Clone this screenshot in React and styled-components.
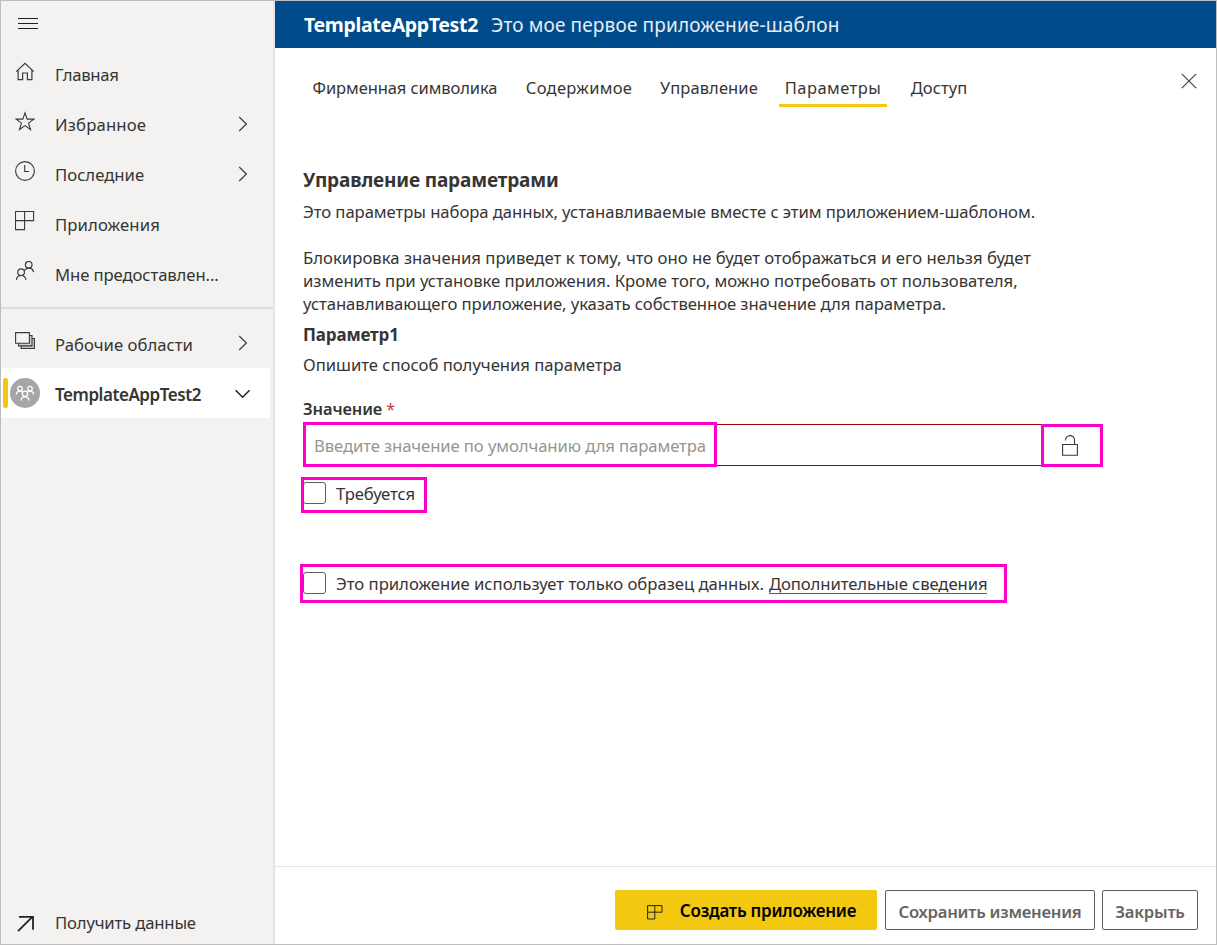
import React from "react";
import styled, { createGlobalStyle, css } from "styled-components";

const Global = createGlobalStyle`
  *, *::before, *::after { box-sizing: border-box; }
  body {
    margin: 0;
    font-family: "Noto Sans", "Open Sans", sans-serif;
    color: #363534;
    background: #fff;
  }
`;

const Frame = styled.div`
  display: flex;
  width: 1217px;
  height: 945px;
  border: 1px solid #bdbdbd;
  background: #fff;
  overflow: hidden;
`;

const Text = styled.span`
  white-space: nowrap;
  font-size: ${(p) => p.$size || 16.7}px;
  font-weight: ${(p) => p.$weight || 400};
  letter-spacing: ${(p) => p.$track || 0}px;
`;

/* ---------- side navigation ---------- */

const Sidebar = styled.nav`
  display: flex;
  flex-direction: column;
  width: 274px;
  flex: none;
  background: #f3f2f1;
  border-right: 2px solid #e6e5e4;
`;

const MenuButton = styled.div`
  height: 48px;
  padding: 16px 0 0 17px;
  flex: none;
  line-height: 0;
`;

const NavRow = styled.div`
  position: relative;
  display: flex;
  align-items: center;
  height: ${(p) => p.$height || 50}px;
  flex: none;
  padding-left: 9px;
  margin-right: ${(p) => (p.$active ? 3 : 0)}px;
  background: ${(p) => (p.$active ? "#fff" : "transparent")};
`;

const NavText = styled(Text)`
  margin-top: ${(p) => p.$drop || 0}px;
`;

const ActiveBar = styled.span`
  position: absolute;
  left: 2px;
  top: 10px;
  width: 5px;
  height: 30px;
  border-radius: 2px;
  background: #f2c811;
`;

const IconSlot = styled.span`
  display: flex;
  justify-content: center;
  width: 30px;
  margin-right: 15px;
  margin-top: ${(p) => -(p.$lift ?? 6)}px;
  line-height: 0;
`;

const Avatar = styled.span`
  display: flex;
  align-items: center;
  justify-content: center;
  width: 30px;
  height: 30px;
  border-radius: 50%;
  background: #a6a6a6;
`;

const ChevronSlot = styled.span`
  display: flex;
  justify-content: center;
  width: 18px;
  margin-left: auto;
  margin-right: ${(p) => (p.$active ? 18 : 21)}px;
  margin-top: ${(p) => (p.$active ? 2 : 0)}px;
`;

const Divider = styled.div`
  flex: none;
  height: 2px;
  margin: 8px 0 9px;
  background: #dedddc;
`;

const Spacer = styled.div`
  flex: 1;
`;

/* ---------- main area ---------- */

const Main = styled.main`
  display: flex;
  flex-direction: column;
  flex: 1;
  min-width: 0;
`;

const TopBar = styled.header`
  display: flex;
  align-items: center;
  gap: 13px;
  height: 47px;
  flex: none;
  padding-left: 29px;
  background: #004b8b;
  color: #fff;
`;

const AppNote = styled(Text)`
  color: #e6edf4;
`;

const TabBar = styled.div`
  display: flex;
  flex: none;
  height: 59px;
  padding: 0 19px 0 36px;
`;

const Tab = styled.div`
  display: flex;
  align-items: center;
  justify-content: center;
  width: ${(p) => p.$width}px;
  margin-right: ${(p) => p.$gap}px;
  padding-top: 23px;
  border-bottom: 3px solid ${(p) => (p.$active ? "#f2c811" : "transparent")};
`;

const CloseButton = styled.div`
  margin-left: auto;
  padding-top: 25px;
  line-height: 0;
`;

const Content = styled.section`
  display: flex;
  flex-direction: column;
  align-items: flex-start;
  flex: 1;
  padding: 61px 113px 0 28px;
`;

const Heading = styled.h1`
  margin: 0 0 7px;
  font-size: 19px;
  line-height: 25px;
  font-weight: 700;
  letter-spacing: -0.15px;
`;

const Paragraph = styled.p`
  display: flex;
  flex-direction: column;
  margin: 0 0 ${(p) => p.$after}px;
  line-height: 23px;
`;

const Star = styled(Text)`
  color: #d13438;
`;

const callout = css`
  &::after {
    content: "";
    position: absolute;
    inset: ${(p) => p.$inset};
    border: 3px solid #ff00c8;
    pointer-events: none;
  }
`;

const Field = styled.div`
  display: flex;
  width: 799px;
  height: 42px;
  margin: 3px 0 16px 1px;
  border: 1px solid #a80000;
`;

const FieldInput = styled.div`
  position: relative;
  display: flex;
  align-items: center;
  width: 412px;
  padding: 0 0 0 9px;
  color: #979593;
  ${callout}
`;

const LockButton = styled.div`
  position: relative;
  display: flex;
  align-items: center;
  justify-content: center;
  width: 60px;
  margin-left: auto;
  padding: 1px 4px 0 0;
  ${callout}
`;

const CheckRow = styled.label`
  position: relative;
  display: flex;
  align-items: center;
  gap: 10px;
  height: 23px;
  width: ${(p) => p.$width}px;
  margin: 0 0 ${(p) => p.$after || 0}px;
  ${callout}
`;

const CheckBox = styled.span`
  flex: none;
  width: 23px;
  height: 22px;
  margin-bottom: 1px;
  border: 1px solid #605e5c;
  border-radius: 3px;
`;

const CheckText = styled.span`
  display: flex;
  gap: 5px;
  line-height: 23px;
`;

const Link = styled(Text)`
  height: 22px;
  border-bottom: 1px solid #605e5c;
`;

const Footer = styled.footer`
  display: flex;
  align-items: flex-start;
  flex: none;
  height: 78px;
  padding: 23px 18px 0 0;
  justify-content: flex-end;
  border-top: 1px solid #e6e5e4;
`;

const Button = styled.button`
  display: flex;
  align-items: center;
  justify-content: center;
  height: 40px;
  width: ${(p) => p.$width}px;
  margin-left: ${(p) => p.$before || 0}px;
  padding: ${(p) => (p.$primary ? "1px 0 0 11px" : "3px 0 0")};
  gap: 17px;
  border: ${(p) => (p.$primary ? "none" : "1px solid #605e5c")};
  border-radius: 2px;
  background: ${(p) => (p.$primary ? "#f2c811" : "#fff")};
  color: ${(p) => (p.$primary ? "#000" : "#666462")};
  font-family: inherit;

  svg {
    margin-top: 3px;
  }
`;

/* ---------- icons ---------- */

const Icon = ({ w = 20, h = 20, sw = 1, stroke = "#3b3a39", children }) => (
  <svg width={w} height={h} viewBox={`0 0 ${w} ${h}`} fill="none" stroke={stroke} strokeWidth={sw}>
    {children}
  </svg>
);

const MenuIcon = () => (
  <Icon h={12} stroke="#201f1e">
    <path d="M0 1.5H20M0 6.5H20M0 11.5H20" />
  </Icon>
);

const HomeIcon = () => (
  <Icon sw={1.2}>
    <path d="M1.2 10.6L10 2.4L18.8 10.6M3.1 9V18.6H7.6V12H12.4V18.6H16.9V9" />
  </Icon>
);

const StarIcon = () => (
  <Icon sw={1.1}>
    <path d="M10 1.8L12.2 8.1H18.8L13.5 12.1L15.5 18.5L10 14.6L4.5 18.5L6.5 12.1L1.2 8.1H7.8Z" />
  </Icon>
);

const ClockIcon = () => (
  <Icon sw={1.1}>
    <circle cx="10" cy="10" r="9.4" />
    <path d="M9.7 4V10.5H14" />
  </Icon>
);

const AppsIcon = () => (
  <Icon sw={1.1}>
    <path d="M.5 .5H18.6V9.6H.5ZM9.6 .5V18.6H.5V9.6" />
  </Icon>
);

const PeopleIcon = () => (
  <Icon sw={1.2}>
    <circle cx="13.7" cy="3.8" r="3.3" />
    <path d="M9.4 9.3C11.5 6.4 17.6 5.6 18.6 11.2" />
    <circle cx="6.1" cy="11.2" r="3.3" />
    <path d="M1.4 18.9C2 13 10.2 13 10.9 18.9" />
  </Icon>
);

const WorkspacesIcon = () => (
  <Icon sw={1.1}>
    <path d="M6.2 18.5V8.5H19.5V18.5Z" fill="#c8c6c4" />
    <path d="M3.5 15.9V5.5H17V15.9Z" fill="#d2d0ce" />
    <path d="M.6 2.6H14.4V13.2H.6Z" fill="#f3f2f1" />
  </Icon>
);

const TeamIcon = () => (
  <Icon w={20} h={18} stroke="#fff" sw={1.3}>
    <circle cx="5" cy="4.6" r="2.3" />
    <circle cx="15" cy="4.6" r="2.3" />
    <circle cx="10" cy="9.8" r="2.6" />
    <path d="M1.3 10.4C1.6 7 5.5 6 7.5 8.2M18.7 10.4C18.4 7 14.5 6 12.5 8.2M6 16.6C6.5 11.6 13.5 11.6 14 16.6" />
  </Icon>
);

const ChevronRight = () => (
  <Icon w={10} h={16} sw={1.2}>
    <path d="M1.2 1L8.4 8L1.2 15" />
  </Icon>
);

const ChevronDown = () => (
  <Icon w={16} h={10} sw={1.6} stroke="#252423">
    <path d="M.6 1.2L7.6 8.2L14.6 1.2" />
  </Icon>
);

const ArrowIcon = () => (
  <Icon w={18} h={18} sw={1.8} stroke="#252423">
    <path d="M2 16.2L16.4 1.9M3 1.9H17V14.8" />
  </Icon>
);

const CloseIcon = () => (
  <Icon w={16} h={16} sw={1.2} stroke="#484644">
    <path d="M.8 .8L15.2 15.2M15.2 .8L.8 15.2" />
  </Icon>
);

const LockIcon = () => (
  <Icon w={16} h={21} sw={1.1}>
    <path d="M.6 9.5H15.4V20.3H.6ZM3.5 5.5C3.3 -.9 12.5 -.9 12.5 5V9.5" />
  </Icon>
);

const AppsSmallIcon = () => (
  <Icon w={16} h={15} stroke="#252423">
    <path d="M.6 .6H15V7.2H.6ZM7.8 .6V14H.6V7.2" />
  </Icon>
);

const MAIN_NAV = [
  { label: "Главная", icon: HomeIcon, track: -0.3 },
  { label: "Избранное", icon: StarIcon, track: 0.15, more: true },
  { label: "Последние", icon: ClockIcon, track: 0, more: true },
  { label: "Приложения", icon: AppsIcon, track: 0.1 },
  { label: "Мне предоставлен...", icon: PeopleIcon, track: -0.1 },
];

const TABS = [
  { label: "Фирменная символика", width: 188, gap: 26, track: -0.08 },
  { label: "Содержимое", width: 108, gap: 26, track: 0.3 },
  { label: "Управление", width: 100, gap: 20, track: 0.1 },
  { label: "Параметры", width: 108, gap: 22, track: 0.45, active: true },
  { label: "Доступ", width: 60, gap: 0, track: 0.1 },
];

function NavItem({ label, icon: Glyph, track, drop, more }) {
  return (
    <NavRow>
      <IconSlot><Glyph /></IconSlot>
      <NavText $track={track} $drop={drop}>{label}</NavText>
      {more && <ChevronSlot><ChevronRight /></ChevronSlot>}
    </NavRow>
  );
}

export default function App() {
  return (
    <>
      <Global />
      <Frame>
        <Sidebar>
          <MenuButton><MenuIcon /></MenuButton>
          {MAIN_NAV.map((item) => <NavItem key={item.label} {...item} />)}
          <Divider />
          <NavItem label="Рабочие области" icon={WorkspacesIcon} track={0.02} drop={2} more />
          <NavRow $active>
            <ActiveBar />
            <IconSlot $lift={0}><Avatar><TeamIcon /></Avatar></IconSlot>
            <NavText $size={17} $weight={600} $track={-0.45} $drop={2}>TemplateAppTest2</NavText>
            <ChevronSlot $active><ChevronDown /></ChevronSlot>
          </NavRow>
          <Spacer />
          <NavRow $height={44}>
            <IconSlot $lift={-3}><ArrowIcon /></IconSlot>
            <NavText $track={-0.18}>Получить данные</NavText>
          </NavRow>
        </Sidebar>

        <Main>
          <TopBar>
            <Text $size={19.5} $weight={700} $track={-0.35}>TemplateAppTest2</Text>
            <AppNote $size={19} $track={0.15}>Это мое первое приложение-шаблон</AppNote>
          </TopBar>

          <TabBar>
            {TABS.map((t) => (
              <Tab key={t.label} $width={t.width} $gap={t.gap} $active={t.active}>
                <Text $size={16.5} $track={t.track}>{t.label}</Text>
              </Tab>
            ))}
            <CloseButton><CloseIcon /></CloseButton>
          </TabBar>

          <Content>
            <Heading>Управление параметрами</Heading>
            <Paragraph $after={23}>
              <Text $track={-0.075}>Это параметры набора данных, устанавливаемые вместе с этим приложением-шаблоном.</Text>
            </Paragraph>
            <Paragraph $after={8}>
              <Text $track={0.01}>Блокировка значения приведет к тому, что оно не будет отображаться и его нельзя будет</Text>
              <Text $track={-0.03}>изменить при установке приложения. Кроме того, можно потребовать от пользователя,</Text>
              <Text $track={-0.08}>устанавливающего приложение, указать собственное значение для параметра.</Text>
            </Paragraph>
            <Paragraph $after={7}>
              <Text $size={17} $weight={700} $track={-0.15}>Параметр1</Text>
            </Paragraph>
            <Paragraph $after={21}>
              <Text $track={-0.03}>Опишите способ получения параметра</Text>
            </Paragraph>
            <Paragraph $after={0}>
              <span>
                <Text $size={16.5} $weight={620} $track={-0.15}>Значение </Text>
                <Star $size={16}>*</Star>
              </span>
            </Paragraph>

            <Field>
              <FieldInput $inset="-3px 0 -2px -2px">
                <Text $track={-0.11}>Введите значение по умолчанию для параметра</Text>
              </FieldInput>
              <LockButton $inset="-1px -1px -2px -1px"><LockIcon /></LockButton>
            </Field>

            <CheckRow $width={112} $after={67} $inset="-5px -12px -8px -2px">
              <CheckBox />
              <CheckText><Text $track={-0.1}>Требуется</Text></CheckText>
            </CheckRow>

            <CheckRow $width={683} $inset="-8px -21px -8px -3px">
              <CheckBox />
              <CheckText>
                <Text $track={-0.02}>Это приложение использует только образец данных.</Text>
                <Link $track={-0.1}>Дополнительные сведения</Link>
              </CheckText>
            </CheckRow>
          </Content>

          <Footer>
            <Button $primary $width={262}>
              <AppsSmallIcon />
              <Text $size={17} $weight={600} $track={-0.25}>Создать приложение</Text>
            </Button>
            <Button $width={210} $before={8}>
              <Text $size={16.7} $weight={600} $track={-0.25}>Сохранить изменения</Text>
            </Button>
            <Button $width={96} $before={7}>
              <Text $size={16.7} $weight={600} $track={-0.25}>Закрыть</Text>
            </Button>
          </Footer>
        </Main>
      </Frame>
    </>
  );
}
